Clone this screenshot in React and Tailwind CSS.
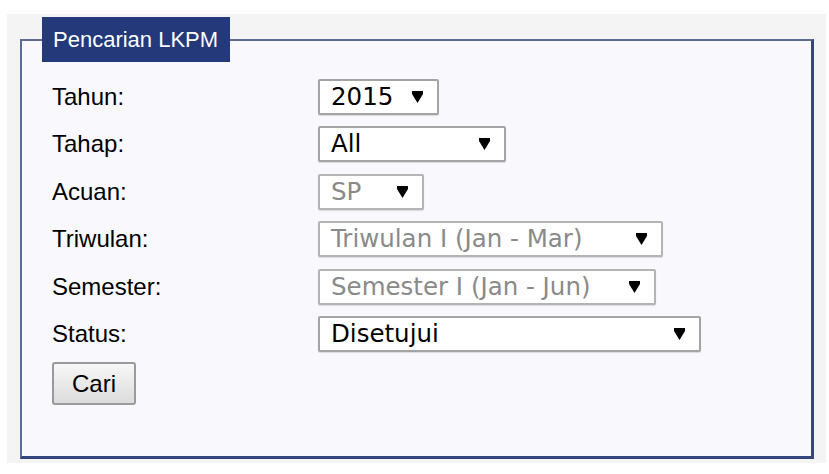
const fields = [
  { label: "Tahun:", value: "2015", width: "w-[121px]" },
  { label: "Tahap:", value: "All", width: "w-[188px]" },
  { label: "Acuan:", value: "SP", width: "w-[106px]", disabled: true },
  { label: "Triwulan:", value: "Triwulan I (Jan - Mar)", width: "w-[345px]", disabled: true },
  { label: "Semester:", value: "Semester I (Jan - Jun)", width: "w-[338px]", disabled: true },
  { label: "Status:", value: "Disetujui", width: "w-[383px]" },
];

function Caret() {
  return (
    <svg width="11" height="12" viewBox="0 0 11 12" className="shrink-0">
      <polygon points="0,0 11,0 11,3 5.5,12 0,3" fill="#000" />
    </svg>
  );
}

function SelectBox({ value, width, disabled }) {
  return (
    <div
      className={`${width} flex h-[36px] items-center justify-between rounded-[2px] border-2 bg-white pl-[11px] pr-[14px] shadow-[0_1px_1px_rgba(0,0,0,0.12)] ${
        disabled ? "border-[#b4b4b4] text-[#8a8a8a]" : "border-[#a4a4a4] text-black"
      }`}
      style={{ fontFamily: '"DejaVu Sans", Verdana, sans-serif' }}
    >
      <span className="text-[24.5px] leading-none whitespace-nowrap">{value}</span>
      <Caret />
    </div>
  );
}

export default function App() {
  return (
    <div className="min-h-[474px] bg-white pt-[14px] pl-[7px]" style={{ fontFamily: '"Liberation Sans", Arial, sans-serif' }}>
      <div className="h-[449px] w-[819px] bg-[#f4f4f4] pt-[3px] pl-[13px]">
        <fieldset className="h-[442px] w-[794px] border-t-2 border-l-2 border-r-[3px] border-b-[3px] border-t-[#5d6b95] border-l-[#5d6b95] border-r-[#34467c] border-b-[#34467c] bg-[#f9f9fd] px-[20px]">
          <legend className="h-[45px] w-[188px] bg-[#24397a] pl-[11px] text-[22px] leading-[45px] text-white">
            Pencarian LKPM
          </legend>
          <div className="pt-[11px] pl-[10px]">
            {fields.map((f) => (
              <div key={f.label} className="grid h-[47.5px] grid-cols-[266px_1fr] items-center">
                <span className="text-[24px] text-black">{f.label}</span>
                <SelectBox value={f.value} width={f.width} disabled={f.disabled} />
              </div>
            ))}
            <button className="mt-[4px] h-[43px] w-[84px] rounded-[3px] border-2 border-[#9a9a9a] bg-gradient-to-b from-[#f7f7f7] to-[#dcdcdc] text-[24px] text-black">
              Cari
            </button>
          </div>
        </fieldset>
      </div>
    </div>
  );
}
